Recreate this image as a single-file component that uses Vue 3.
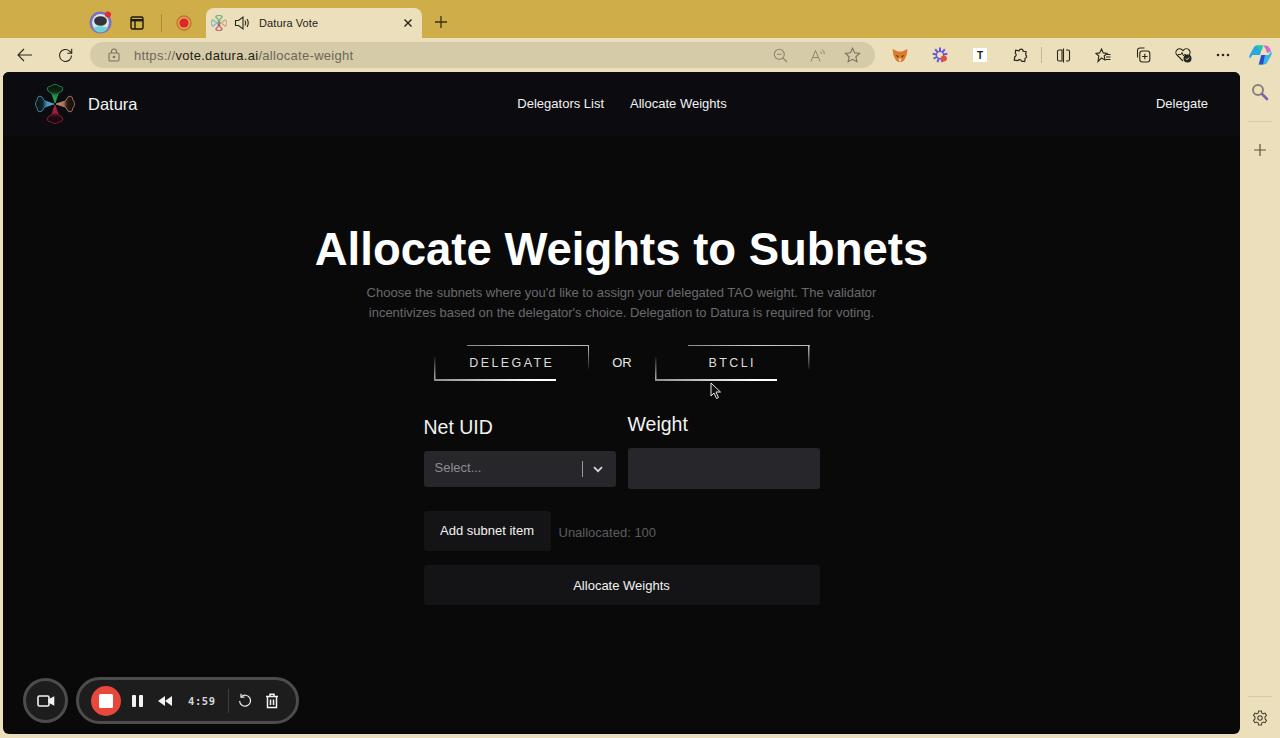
<script setup>
const petals = [
  { rot: 0, stroke: '#2b9c5c', fill: 'url(#pg)' },
  { rot: 90, stroke: '#b98a70', fill: 'url(#pb)' },
  { rot: 180, stroke: '#a32142', fill: 'url(#pr)' },
  { rot: 270, stroke: '#4f9ec0', fill: 'url(#pl)' },
]
const petalPath = 'M0 -1 L-3 -10 C-3.4 -12 -7.5 -11.5 -7.8 -15 C-8 -18 -4.5 -17.2 -3 -18.5 C-1.5 -19.8 1.5 -19.8 3 -18.5 C4.5 -17.2 8 -18 7.8 -15 C7.5 -11.5 3.4 -12 3 -10 Z'
</script>

<template>
  <div class="browser">
    <header class="tabstrip">
      <div class="avatar">
        <svg width="24" height="24" viewBox="0 0 24 24">
          <circle cx="11.5" cy="12.5" r="11" fill="#7c6fc0" />
          <circle cx="11.5" cy="12.5" r="8.5" fill="#d9e6e6" />
          <ellipse cx="11.5" cy="11" rx="6.4" ry="4.8" fill="#33333a" />
          <path d="M4 18 Q11.5 14.5 19 18 Q16 22.5 11.5 22.5 Q7 22.5 4 18Z" fill="#6fd0d6" />
          <circle cx="19" cy="4.5" r="3" fill="#e0302e" />
        </svg>
      </div>
      <div class="strip-slot">
        <svg width="16" height="16" viewBox="0 0 16 16" fill="none" stroke="#1d1a10" stroke-width="1.4">
          <rect x="2" y="2" width="12" height="12" rx="1.5" />
          <path d="M2 5.2H14" stroke-width="2.4" />
          <path d="M6 5V14" />
        </svg>
      </div>
      <span class="strip-sep"></span>
      <div class="strip-rec">
        <svg width="16" height="16" viewBox="0 0 16 16">
          <circle cx="8" cy="8" r="7" fill="none" stroke="#d2683a" stroke-width="1.3" />
          <circle cx="8" cy="8" r="4.6" fill="#e0252a" />
        </svg>
      </div>
      <div class="tab">
        <svg class="tab-favicon" width="16" height="16" viewBox="-20 -20 40 40">
          <g v-for="p in petals" :key="'f' + p.rot" :transform="`rotate(${p.rot})`">
            <path :d="petalPath" fill="none" :stroke="p.stroke" stroke-width="3" opacity="0.7" />
          </g>
        </svg>
        <svg class="tab-sound" width="17" height="16" viewBox="0 0 17 16" fill="none" stroke="#2a261a" stroke-width="1.1">
          <path d="M1.5 5.5H4.5L9 2V14L4.5 10.5H1.5Z" />
          <path d="M11 5.5Q12.5 8 11 10.5M13 4Q15.5 8 13 12" />
        </svg>
        <span class="tab-title">Datura Vote</span>
        <svg class="tab-close" width="10" height="10" viewBox="0 0 10 10" stroke="#1d1a10" stroke-width="1.3">
          <path d="M1.5 1.5L8.5 8.5M8.5 1.5L1.5 8.5" />
        </svg>
      </div>
      <div class="newtab">
        <svg width="14" height="14" viewBox="0 0 14 14" stroke="#3a3214" stroke-width="1.3">
          <path d="M7 1V13M1 7H13" />
        </svg>
      </div>
    </header>

    <div class="toolbar">
      <div class="tool">
        <svg width="18" height="16" viewBox="0 0 18 16" fill="none" stroke="#2a261a" stroke-width="1.1">
          <path d="M16 8H2M8 2L2 8L8 14" />
        </svg>
      </div>
      <div class="tool">
        <svg width="17" height="17" viewBox="0 0 17 17" fill="none" stroke="#2a261a" stroke-width="1.1">
          <path d="M14.5 8.5A6 6 0 1 1 12.6 4.1L14.5 6" />
          <path d="M14.7 1.8V6.2H10.3" />
        </svg>
      </div>
      <div class="address">
        <svg class="lock" width="12" height="14" viewBox="0 0 12 14" fill="none" stroke="#7b735c" stroke-width="1.1">
          <rect x="1" y="5" width="10" height="8" rx="1.2" />
          <path d="M3.5 5V3.5A2.5 2.5 0 0 1 8.5 3.5V5" />
          <circle cx="6" cy="9" r="0.8" fill="#7b735c" />
        </svg>
        <span class="url"><span class="url-dim">https://</span><span class="url-host">vote.datura.ai</span><span class="url-dim">/allocate-weight</span></span>
        <div class="addr-icons">
          <svg width="15" height="15" viewBox="0 0 15 15" fill="none" stroke="#8d8468" stroke-width="1.1">
            <circle cx="6.3" cy="6.3" r="5" />
            <path d="M10 10L14 14M4 6.3H8.6" />
          </svg>
          <svg width="15" height="15" viewBox="0 0 15 15" fill="none" stroke="#8d8468" stroke-width="1">
            <path d="M1 13.5L5.5 2.5L10 13.5M2.8 9.5H8.2" />
            <path d="M10 3.5Q11.5 4.5 11.5 6M12 1.5Q14.3 3 14.3 6" />
          </svg>
          <svg class="addr-star" width="17" height="16" viewBox="0 0 17 16" fill="none" stroke="#7b735c" stroke-width="1.1">
            <path d="M8.5 1.2L10.6 5.8L15.6 6.4L11.9 9.8L12.9 14.8L8.5 12.3L4.1 14.8L5.1 9.8L1.4 6.4L6.4 5.8Z" />
          </svg>
        </div>
      </div>
      <div class="tools-right">
        <div class="tool">
          <svg width="16" height="15" viewBox="0 0 16 14">
            <path d="M0.5 0.5L6 3H10L15.5 0.5L14.5 7L12 12L9.5 13.5H6.5L4 12L1.5 7Z" fill="#dd7a2c" />
            <path d="M3.5 6.5L6.5 7.5L6 9ZM12.5 6.5L9.5 7.5L10 9Z" fill="#3a2a1c" />
            <path d="M6.5 11L8 9.5L9.5 11L8 13.5Z" fill="#f4e6d0" />
          </svg>
        </div>
        <div class="tool">
          <svg width="16" height="16" viewBox="-8 -8 16 16">
            <g stroke="#6a56d8" stroke-width="2">
              <path v-for="a in [0, 40, 80, 120, 160, 200, 240, 280, 320]" :key="a" d="M0 -3.5V-7.5" :transform="`rotate(${a})`" />
            </g>
            <circle cx="0" cy="0" r="3.6" fill="none" stroke="#6a56d8" stroke-width="1.4" />
            <circle cx="3.8" cy="3.6" r="3" fill="#e0533a" />
          </svg>
        </div>
        <div class="tool">
          <span class="ext-t">T</span>
        </div>
        <div class="tool">
          <svg width="15" height="15" viewBox="0 0 15 15" fill="none" stroke="#2a261a" stroke-width="1.2">
            <path d="M5.5 3A2 2 0 0 1 9.5 3H12.5V6A2 2 0 0 1 12.5 9.6V13H9.4A2 2 0 0 0 5.6 13H2V9.6A2 2 0 0 0 2 6V3Z" transform="rotate(8 7.5 7.5)" />
          </svg>
        </div>
        <span class="tool-sep"></span>
        <div class="tool">
          <svg width="15" height="15" viewBox="0 0 15 15" fill="none" stroke="#2a261a" stroke-width="1.1">
            <path d="M6 2H3A1.5 1.5 0 0 0 1.5 3.5V11.5A1.5 1.5 0 0 0 3 13H6ZM7.5 0.5V14.5M10 2H12A1.5 1.5 0 0 1 13.5 3.5V11.5A1.5 1.5 0 0 1 12 13H10" />
          </svg>
        </div>
        <div class="tool">
          <svg width="16" height="15" viewBox="0 0 16 15" fill="none" stroke="#2a261a" stroke-width="1.1">
            <path d="M6.5 1L8.3 4.9L12 5.4L9.2 8L10 12L6.5 10L3 13.5L3.8 8L1 5.4L4.7 4.9Z" />
            <path d="M11.5 6.5H15.5M11 9H15.5M10.5 11.5H15.5" />
          </svg>
        </div>
        <div class="tool">
          <svg width="16" height="16" viewBox="0 0 16 16" fill="none" stroke="#2a261a" stroke-width="1.1">
            <path d="M2.5 10.5V3.5A2.5 2.5 0 0 1 5 1H9.5" />
            <rect x="4.8" y="4" width="10" height="11" rx="2.4" />
            <path d="M9.8 6.8V12.2M7.1 9.5H12.5" />
          </svg>
        </div>
        <div class="tool">
          <svg width="17" height="16" viewBox="0 0 17 16" fill="none">
            <path d="M8 14L2 8A3.6 3.6 0 0 1 7.2 2.8L8 3.6L8.8 2.8A3.6 3.6 0 0 1 14 8" stroke="#2a261a" stroke-width="1.1" />
            <path d="M3 7.5H6L7 5.5L8.5 9L9.5 7.5H11" stroke="#2a261a" stroke-width="1" />
            <circle cx="12.5" cy="11.5" r="4" fill="#25241f" />
            <path d="M10.8 11.5L12 12.8L14.2 10.4" stroke="#e9decb" stroke-width="1" />
          </svg>
        </div>
        <div class="tool">
          <svg width="14" height="4" viewBox="0 0 14 4" fill="#2a261a">
            <circle cx="2" cy="2" r="1.3" />
            <circle cx="7" cy="2" r="1.3" />
            <circle cx="12" cy="2" r="1.3" />
          </svg>
        </div>
        <div class="copilot">
          <svg width="23" height="20" viewBox="0 0 23 20">
            <path d="M8 0.5H13.5L11 10H3.5L1 13.5C0.3 12.5 0 11.5 0.5 10.3L4.5 3C5.3 1.3 6.5 0.5 8 0.5Z" fill="#2aa7e0" />
            <path d="M7 0.5H14L13 5H10Z" fill="#1fc7a8" />
            <path d="M15 19.5H9.5L12 10H19.5L22 6.5C22.7 7.5 23 8.5 22.5 9.7L18.5 17C17.7 18.7 16.5 19.5 15 19.5Z" fill="#3bb4e6" />
            <path d="M10 19.5L12.5 10H16L14 19.5Z" fill="#2b48c8" />
            <path d="M14 0.5H17C19 0.5 21.5 3.5 22 6.5L18 8C17.5 5 16 2.5 14 0.5Z" fill="#d768c8" />
          </svg>
        </div>
      </div>
    </div>

    <div class="workspace">
      <main class="page">
        <nav class="nav">
          <div class="brand">
            <svg width="40" height="40" viewBox="-20 -20 40 40">
              <defs>
                <linearGradient id="pg" x1="0" y1="1" x2="0" y2="0"><stop offset="0" stop-color="#22c060" /><stop offset="0.42" stop-color="#178a45" /><stop offset="0.6" stop-color="#0c2a18" /><stop offset="1" stop-color="#0a0f0c" /></linearGradient>
                <linearGradient id="pb" x1="0" y1="1" x2="0" y2="0"><stop offset="0" stop-color="#d9a080" /><stop offset="0.42" stop-color="#a06f55" /><stop offset="0.6" stop-color="#2a1a13" /><stop offset="1" stop-color="#100c0a" /></linearGradient>
                <linearGradient id="pr" x1="0" y1="1" x2="0" y2="0"><stop offset="0" stop-color="#d42450" /><stop offset="0.42" stop-color="#98193a" /><stop offset="0.6" stop-color="#2c0a14" /><stop offset="1" stop-color="#10090b" /></linearGradient>
                <linearGradient id="pl" x1="0" y1="1" x2="0" y2="0"><stop offset="0" stop-color="#5cbcf0" /><stop offset="0.42" stop-color="#3d86ac" /><stop offset="0.6" stop-color="#12262f" /><stop offset="1" stop-color="#0a0d10" /></linearGradient>
              </defs>
              <g v-for="p in petals" :key="p.rot" :transform="`rotate(${p.rot})`">
                <path :d="petalPath" :fill="p.fill" :stroke="p.stroke" stroke-width="0.8" />
              </g>
            </svg>
            <span class="brand-name">Datura</span>
          </div>
          <div class="nav-links">
            <a class="nav-link">Delegators List</a>
            <a class="nav-link">Allocate Weights</a>
          </div>
          <a class="nav-link nav-right">Delegate</a>
        </nav>

        <section class="content">
          <h1 class="title">Allocate Weights to Subnets</h1>
          <p class="subtitle">Choose the subnets where you'd like to assign your delegated TAO weight. The validator incentivizes based on the delegator's choice. Delegation to Datura is required for voting.</p>

          <div class="choice">
            <button class="frame-btn">DELEGATE</button>
            <span class="or">OR</span>
            <button class="frame-btn">BTCLI</button>
          </div>

          <div class="form">
            <div class="fields">
              <div class="field field-left">
                <label class="label">Net UID</label>
                <div class="select">
                  <span class="placeholder">Select...</span>
                  <span class="select-sep"></span>
                  <svg width="10" height="7" viewBox="0 0 10 7" fill="none" stroke="#d8d8d8" stroke-width="1.7">
                    <path d="M1 1.2L5 5.2L9 1.2" />
                  </svg>
                </div>
              </div>
              <div class="field">
                <label class="label">Weight</label>
                <div class="input"></div>
              </div>
            </div>
            <div class="add-row">
              <button class="btn btn-add">Add subnet item</button>
              <span class="unallocated">Unallocated: 100</span>
            </div>
            <button class="btn btn-full">Allocate Weights</button>
          </div>
        </section>

        <svg class="cursor" width="12" height="18" viewBox="0 0 12 18">
          <path d="M1 1V14L4 11L6.5 16.5L8.5 15.5L6 10H10.5Z" fill="#111" stroke="#e8e8e8" stroke-width="1" />
        </svg>

        <div class="recorder">
          <div class="rec-cam">
            <svg width="18" height="14" viewBox="0 0 18 14" fill="none" stroke="#f2f2f2" stroke-width="1.6">
              <rect x="1" y="2" width="11" height="10" rx="1.5" />
              <path d="M12 6L16.5 3.5V10.5L12 8Z" fill="#f2f2f2" />
            </svg>
          </div>
          <div class="rec-pill">
            <span class="rec-stop"><span class="rec-square"></span></span>
            <span class="rec-pause"><i></i><i></i></span>
            <svg class="rec-rew" width="16" height="12" viewBox="0 0 16 12" fill="#f2f2f2">
              <path d="M8 1V11L1 6Z" />
              <path d="M15 1V11L8 6Z" />
            </svg>
            <span class="rec-time">4:59</span>
            <span class="rec-sep"></span>
            <svg class="rec-undo" width="14" height="15" viewBox="0 0 14 15" fill="none" stroke="#f2f2f2" stroke-width="1.2">
              <path d="M3.2 3.8A5.5 5.5 0 1 1 1.6 8" />
              <path d="M3 0.8V4.2H6.4" />
            </svg>
            <svg class="rec-trash" width="14" height="16" viewBox="0 0 14 16" fill="none" stroke="#f2f2f2" stroke-width="1.5">
              <path d="M1 3.5H13M5 3.5V1.2H9V3.5" />
              <path d="M2.5 3.5V14.5H11.5V3.5" />
              <path d="M5.5 6.5V12M8.5 6.5V12" />
            </svg>
          </div>
        </div>
      </main>

      <aside class="sidebar">
        <svg class="side-search" width="18" height="18" viewBox="0 0 18 18" fill="none">
          <circle cx="7" cy="7" r="5" stroke="#8a8270" stroke-width="2" />
          <path d="M11 11L16 16" stroke="#7f5fb0" stroke-width="2.6" stroke-linecap="round" />
        </svg>
        <span class="side-line"></span>
        <svg class="side-plus" width="14" height="14" viewBox="0 0 14 14" stroke="#5c543e" stroke-width="1.2">
          <path d="M7 1V13M1 7H13" />
        </svg>
        <span class="side-line side-bottom"></span>
        <svg class="side-gear" width="16" height="16" viewBox="0 0 16 16" fill="none" stroke="#4a4330" stroke-width="1.1">
          <path d="M6.6 1H9.4L9.8 3A5.2 5.2 0 0 1 11.2 3.8L13.1 3.1L14.5 5.5L13 6.9A5.2 5.2 0 0 1 13 8.9L14.5 10.3L13.1 12.7L11.2 12.1A5.2 5.2 0 0 1 9.8 12.9L9.4 15H6.6L6.2 12.9A5.2 5.2 0 0 1 4.8 12.1L2.9 12.7L1.5 10.3L3 8.9A5.2 5.2 0 0 1 3 6.9L1.5 5.5L2.9 3.1L4.8 3.8A5.2 5.2 0 0 1 6.2 3Z" />
          <circle cx="8" cy="8" r="2.2" />
        </svg>
      </aside>
    </div>
  </div>
</template>

<style>
html, body { margin: 0; background: #ebe0bb; overflow: hidden; }
</style>

<style scoped>
.browser {
  width: 1280px;
  height: 738px;
  display: flex;
  flex-direction: column;
  background: #ebe0bb;
  font-family: "Liberation Sans", Arial, sans-serif;
  overflow: hidden;
}

/* tab strip */
.tabstrip {
  height: 38px;
  background: #cfae4a;
  display: flex;
  align-items: flex-end;
  padding-left: 89px;
  box-sizing: border-box;
  flex-shrink: 0;
}
.avatar { width: 24px; height: 24px; margin-bottom: 4px; }
.strip-slot { width: 16px; height: 16px; margin: 0 0 7px 16px; }
.strip-sep { width: 1px; height: 18px; background: #a88c32; margin: 0 14px 6px 16px; }
.strip-rec { width: 16px; height: 16px; margin: 0 14px 7px 0; }
.tab {
  width: 216px;
  height: 30px;
  background: #ebe0bb;
  border-radius: 8px 8px 0 0;
  display: flex;
  align-items: center;
  padding: 0 9px 0 5px;
  box-sizing: border-box;
}
.tab-favicon { margin-right: 7px; }
.tab-sound { margin-right: 8px; }
.tab-title { font-size: 11px; color: #25221a; flex: 1; letter-spacing: 0.1px; }
.newtab { width: 14px; height: 14px; margin: 0 0 9px 12px; }

/* toolbar */
.toolbar {
  height: 34px;
  display: flex;
  align-items: center;
  padding: 0 3px 0 5px;
  box-sizing: border-box;
  flex-shrink: 0;
}
.tool {
  width: 40px;
  height: 26px;
  display: flex;
  align-items: center;
  justify-content: center;
}
.address {
  width: 785px;
  height: 26px;
  margin-left: 5px;
  border-radius: 13px;
  background: #d5cba9;
  display: flex;
  align-items: center;
  padding: 0 14px 0 18px;
  box-sizing: border-box;
}
.lock { margin-right: 14px; }
.url { font-size: 13px; flex: 1; letter-spacing: 0.3px; }
.url-dim { color: #6d6756; }
.url-host { color: #1f1c14; }
.addr-icons { display: flex; align-items: center; gap: 22px; margin-right: 0; }
.addr-star { margin-left: -3px; }
.tools-right { display: flex; align-items: center; margin-left: 5px; flex: 1; }
.tool-sep { width: 1px; height: 16px; background: #c2b896; margin: 0 1px 0 1px; }
.ext-t {
  width: 14px;
  height: 14px;
  background: #fff;
  color: #1a1a1a;
  font-size: 10px;
  font-weight: 700;
  display: flex;
  align-items: center;
  justify-content: center;
}
.copilot { flex: 1; display: flex; justify-content: center; }

/* workspace */
.workspace { flex: 1; display: flex; padding-left: 3px; min-height: 0; }
.page {
  width: 1237px;
  height: 662px;
  border-radius: 6px;
  background: #09090a;
  position: relative;
  overflow: hidden;
  color: #fff;
}
.nav {
  height: 64px;
  background: #0b0b10;
  display: grid;
  grid-template-columns: 1fr auto 1fr;
  align-items: center;
  padding: 0 32px;
}
.brand { display: flex; align-items: center; gap: 13px; }
.brand-name { font-size: 16.5px; color: #f4f4f4; }
.nav-links { display: flex; gap: 26px; padding: 0 0 1px 1px; }
.nav-link { font-size: 13px; color: #f2f2f2; }
.nav-right { justify-self: end; padding-bottom: 1px; }

.content { display: flex; flex-direction: column; align-items: center; }
.title {
  margin: 86px 0 0;
  font-size: 45.5px;
  line-height: 56px;
  font-weight: 700;
  color: #fff;
}
.subtitle {
  margin: 5px 0 0;
  width: 530px;
  text-align: center;
  font-size: 13px;
  line-height: 19.5px;
  color: #6a6a6d;
}
.choice { display: flex; align-items: center; margin-top: 23px; gap: 23px; padding-left: 1px; }
.or { font-size: 13px; color: #e8e8e8; margin-bottom: 2px; }
.frame-btn {
  position: relative;
  width: 155px;
  height: 36px;
  background: transparent;
  border: 0;
  padding: 0;
  color: #dcdcde;
  font-family: inherit;
  font-size: 12.5px;
  letter-spacing: 2.4px;
}
.frame-btn::before {
  content: "";
  position: absolute;
  top: 0;
  right: 0;
  width: 122px;
  height: 24px;
  background:
    linear-gradient(90deg, #8a8a8a, #cfcfcf 55%, #b4b4b4) top / 100% 1px no-repeat,
    linear-gradient(180deg, #c8c8c8, #1a1a1a) right / 1.5px 100% no-repeat;
}
.frame-btn::after {
  content: "";
  position: absolute;
  bottom: 0;
  left: 0;
  width: 122px;
  height: 24px;
  background:
    linear-gradient(90deg, #8f8f8f, #ffffff 80%) bottom / 100% 2px no-repeat,
    linear-gradient(0deg, #b8b8b8, #1a1a1a) left / 1.5px 100% no-repeat;
}

.form { width: 396px; display: flex; flex-direction: column; margin-top: 31px; }
.fields { display: grid; grid-template-columns: 1fr 1fr; gap: 12px; }
.field { display: flex; flex-direction: column; gap: 12px; }
.field-left { padding-top: 3px; }
.label { font-size: 19.5px; line-height: 24px; color: #f2f2f2; }
.select {
  height: 36px;
  background: #27272b;
  border-radius: 3px;
  display: flex;
  align-items: center;
  padding: 0 13px 0 11px;
  box-sizing: border-box;
}
.placeholder { flex: 1; font-size: 13px; color: #8e8e92; padding-bottom: 4px; }
.select-sep { width: 1px; height: 16px; background: #9a9a9e; margin-right: 10px; }
.input { height: 41px; background: #27272b; border-radius: 3px; }
.add-row { display: flex; align-items: center; margin-top: 22px; gap: 8px; }
.btn {
  height: 40px;
  border: 0;
  border-radius: 3px;
  background: #141416;
  color: #f2f2f2;
  font-family: inherit;
  font-size: 13px;
}
.btn-add { width: 127px; padding: 0 0 2px; }
.unallocated { font-size: 13px; color: #5c5c60; padding-top: 3px; }
.btn-full { width: 100%; margin-top: 14px; }

.cursor { position: absolute; left: 707px; top: 310px; }

/* recorder overlay */
.recorder {
  position: absolute;
  left: 20px;
  top: 605px;
  display: flex;
  align-items: center;
  gap: 8px;
}
.rec-cam {
  border-radius: 50%;
  background: #1d1d1d;
  border: 3px solid #4c4c4c;
  display: flex;
  align-items: center;
  justify-content: center;
  width: 39px;
  height: 39px;
}
.rec-pill {
  width: 223px;
  height: 47px;
  box-sizing: border-box;
  border-radius: 24px;
  border: 3px solid #4c4c4c;
  background: #1d1d1d;
  display: flex;
  align-items: center;
  padding-left: 12px;
}
.rec-stop {
  width: 30px;
  height: 30px;
  border-radius: 50%;
  background: #e8483c;
  display: flex;
  align-items: center;
  justify-content: center;
}
.rec-square { width: 14px; height: 14px; background: #fff; border-radius: 1.5px; }
.rec-pause { display: flex; gap: 3px; margin-left: 11px; }
.rec-pause i { width: 4px; height: 12px; background: #f2f2f2; border-radius: 1px; }
.rec-rew { margin-left: 14px; }
.rec-time {
  margin-left: 15px;
  width: 28px;
  font-family: "DejaVu Sans Mono", monospace;
  font-size: 10.5px;
  font-weight: 700;
  letter-spacing: 0.6px;
  color: #d8d8d8;
}
.rec-sep { width: 1px; height: 24px; background: #3e3e3e; margin-left: 12px; }
.rec-undo { margin-left: 9px; }
.rec-trash { margin-left: 13px; }

/* sidebar */
.sidebar {
  width: 40px;
  height: 662px;
  display: flex;
  flex-direction: column;
  align-items: center;
}
.side-search { margin-top: 11px; }
.side-line { width: 24px; height: 1px; background: #d6cba6; margin-top: 20px; }
.side-plus { margin-top: 21px; }
.side-bottom { margin-top: auto; }
.side-gear { margin: 13px 0 8px; }
</style>
